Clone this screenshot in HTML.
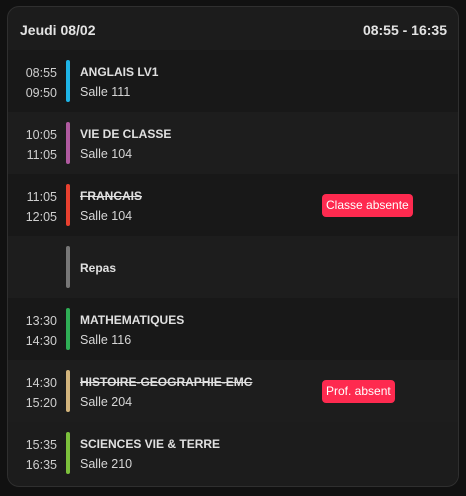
<!DOCTYPE html><html><head><style>
body{margin:0;background:#111;width:466px;height:496px;font-family:"Liberation Sans",sans-serif;overflow:hidden}
.card{position:absolute;left:7px;top:6px;width:450px;height:479px;background:#1c1c1c;border:1px solid #2f2f2f;border-radius:12px;overflow:hidden}
.hd{position:absolute;top:0;left:0;right:0;height:44px;color:#e3e3e3;font-weight:bold;font-size:14px}
.hd .l{position:absolute;left:12px;top:15px}.hd .r{position:absolute;right:11px;top:15px}
.row{position:absolute;left:0;width:450px;height:62px}
.row.d{background:#181818}.row.l{background:#1d1d1d}
.t{position:absolute;right:401px;color:#cfcfcf;font-size:12.5px;text-align:right}
.bar{position:absolute;left:58px;top:10px;width:4px;height:42px;border-radius:2px}
.ti{position:absolute;left:72px;top:15px;color:#e0e0e0;font-weight:bold;font-size:12px}
.sa{position:absolute;left:72px;top:35px;color:#d6d6d6;font-size:12.5px}
.b{position:absolute;background:#fe2a4f;color:#fff;font-size:12px;border-radius:4px;padding:4px 4px 5px;top:20px;left:314px}
s{text-decoration:line-through}
</style></head><body><div class="card">
<div class="hd"><span class="l">Jeudi 08/02</span><span class="r">08:55 - 16:35</span></div>
<div class="row d" style="top:43px"><span class="t" style="top:16px">08:55</span><span class="t" style="top:36px">09:50</span><div class="bar" style="background:#1eb4e6"></div><span class="ti">ANGLAIS LV1</span><span class="sa">Salle 111</span></div>
<div class="row l" style="top:105px"><span class="t" style="top:16px">10:05</span><span class="t" style="top:36px">11:05</span><div class="bar" style="background:#b05aa0"></div><span class="ti">VIE DE CLASSE</span><span class="sa">Salle 104</span></div>
<div class="row d" style="top:167px"><span class="t" style="top:16px">11:05</span><span class="t" style="top:36px">12:05</span><div class="bar" style="background:#e8402f"></div><span class="ti"><s>FRANCAIS</s></span><span class="sa">Salle 104</span><span class="b">Classe absente</span></div>
<div class="row l" style="top:229px"><div class="bar" style="background:#777"></div><span class="ti" style="top:25px">Repas</span></div>
<div class="row d" style="top:291px"><span class="t" style="top:16px">13:30</span><span class="t" style="top:36px">14:30</span><div class="bar" style="background:#2fae55"></div><span class="ti">MATHEMATIQUES</span><span class="sa">Salle 116</span></div>
<div class="row l" style="top:353px"><span class="t" style="top:16px">14:30</span><span class="t" style="top:36px">15:20</span><div class="bar" style="background:#d2b47c"></div><span class="ti"><s>HISTOIRE-GEOGRAPHIE-EMC</s></span><span class="sa">Salle 204</span><span class="b">Prof. absent</span></div>
<div class="row d" style="top:415px;background:#1c1c1c"><span class="t" style="top:16px">15:35</span><span class="t" style="top:36px">16:35</span><div class="bar" style="background:#7cc03c"></div><span class="ti">SCIENCES VIE &amp; TERRE</span><span class="sa">Salle 210</span></div>
</div></body></html>
